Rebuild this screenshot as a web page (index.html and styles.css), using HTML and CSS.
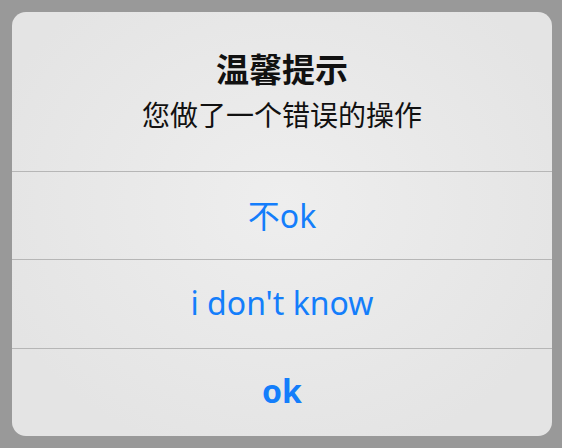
FILE: index.html
```html
<!DOCTYPE html>
<html>
<head>
<meta charset="utf-8">
<link rel="stylesheet" href="styles.css">
</head>
<body>
<div class="dialog">
  <div class="header">
    <div class="title">温馨提示</div>
    <div class="message">您做了一个错误的操作</div>
  </div>
  <div class="btn">不ok</div>
  <div class="btn">i don't know</div>
  <div class="btn bold">ok</div>
</div>
</body>
</html>
```

FILE: styles.css
```css
html, body {
  margin: 0;
  padding: 0;
  background: #999999;
  height: 100%;
}
body {
  padding: 12px 10px 12px 12px;
  box-sizing: border-box;
  font-family: "Noto Sans", "Noto Sans CJK SC", sans-serif;
}
.dialog {
  width: 540px;
  height: 424px;
  border-radius: 14px;
  overflow: hidden;
  background: radial-gradient(ellipse at 50% 45%, #eeeeee 0%, #e4e4e4 80%);
  display: flex;
  flex-direction: column;
}
.header {
  height: 159px;
  box-sizing: border-box;
  padding-top: 37px;
  display: flex;
  flex-direction: column;
  align-items: center;
  color: #111;
}
.title {
  font-size: 33px;
  font-weight: bold;
  line-height: 41px;
}
.message {
  font-size: 28px;
  line-height: 38px;
  margin-top: 6px;
}
.btn {
  flex: 1;
  border-top: 1px solid #b6b6b6;
  display: flex;
  align-items: center;
  justify-content: center;
  color: #147efb;
  font-size: 32px;
  padding-bottom: 3px;
}
.btn.bold {
  font-weight: bold;
}
```
